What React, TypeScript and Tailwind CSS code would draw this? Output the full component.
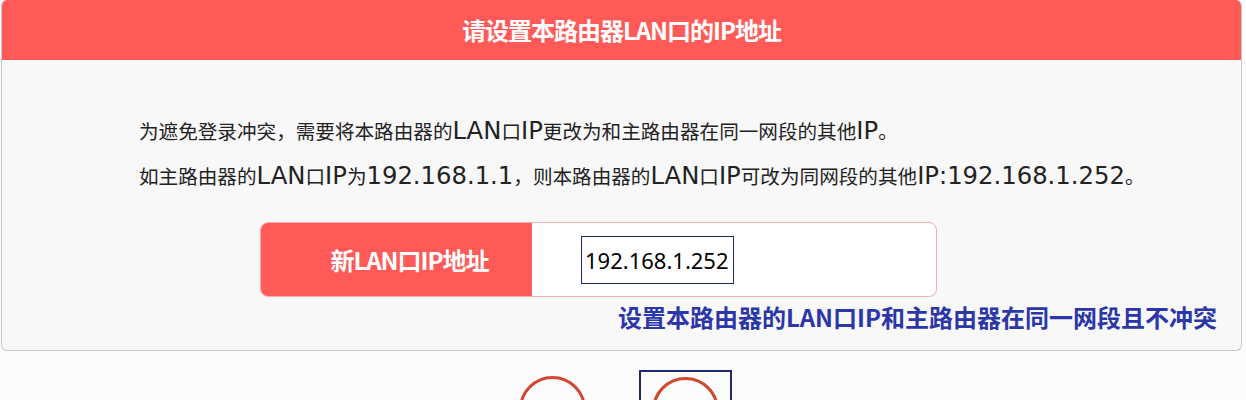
import React, { useState } from 'react';

const cjk = { fontFamily: '"Noto Sans CJK SC", "Noto Sans", sans-serif' };
const latin = { fontFamily: '"Noto Sans", "Noto Sans CJK SC", sans-serif' };
const wideLatin = { fontFamily: '"DejaVu Sans", "Noto Sans CJK SC", sans-serif' };

// latin runs are set a bit larger than the CJK ones, like the router's UI font
function Mixed({ text }: { text: string }) {
    const parts = text.split(/([A-Za-z0-9.:]+)/);
    return (
        <>
            {parts.map((p, i) =>
                i % 2 === 1 ? (
                    <span key={i} className="text-[24.3px]" style={wideLatin}>{p}</span>
                ) : (
                    <span key={i}>{p}</span>
                )
            )}
        </>
    );
}

export default function App() {
    const [ip, setIp] = useState('192.168.1.252');

    return (
        <div className="w-[1246px] h-[400px] bg-[#fcfcfc] overflow-hidden" style={cjk}>
            <div className="ml-px w-[1241px] rounded-[6px] border border-t-0 border-[#c8c8c8] bg-[#f8f8f9] overflow-hidden">
                <div className="h-[60px] bg-[#ff5a58] flex items-center justify-center">
                    <h2 className="text-white font-bold text-[24px] tracking-[-1px]">请设置本路由器LAN口的IP地址</h2>
                </div>
                <div className="pl-[137px] pt-[48px] text-[19.6px] text-[#222] leading-[45px]">
                    <p><Mixed text="为遮免登录冲突，需要将本路由器的LAN口IP更改为和主路由器在同一网段的其他IP。" /></p>
                    <p><Mixed text="如主路由器的LAN口IP为192.168.1.1，则本路由器的LAN口IP可改为同网段的其他IP:192.168.1.252。" /></p>
                </div>
                <div className="pl-[258px] pt-[24px]">
                    <div className="w-[677px] h-[75px] flex rounded-[8px] border border-[#f0b0ac] overflow-hidden bg-white">
                        <div className="w-[271px] bg-[#ff5a58] flex items-center justify-center pl-[26px]">
                            <span className="text-white font-bold text-[24px] tracking-[-1px]">新LAN口IP地址</span>
                        </div>
                        <div className="flex items-center pl-[49px]">
                            <input
                                value={ip}
                                onChange={(e) => setIp(e.target.value)}
                                className="w-[153px] h-[48px] border-[1.5px] border-[#1f2a6e] bg-white px-[3px] text-[22px] text-black outline-none"
                                style={latin}
                            />
                        </div>
                    </div>
                </div>
                <div className="flex justify-end pr-[24px] pt-[2px] pb-[15px]">
                    <p className="text-[24px] leading-[36px] font-bold text-[#2b36a8]">设置本路由器的LAN口IP和主路由器在同一网段且不冲突</p>
                </div>
            </div>
            <div className="flex items-start pl-[519px] pt-[19px] gap-[53px]">
                <div className="mt-[6px] w-[67px] h-[67px] rounded-full border-[3px] border-[#d04832]" />
                <div className="w-[93px] h-[40px] border-2 border-[#1f2a6e] flex justify-center pt-[5px]">
                    <div className="w-[67px] h-[67px] rounded-full border-[3px] border-[#d04832] shrink-0" />
                </div>
            </div>
        </div>
    );
}
